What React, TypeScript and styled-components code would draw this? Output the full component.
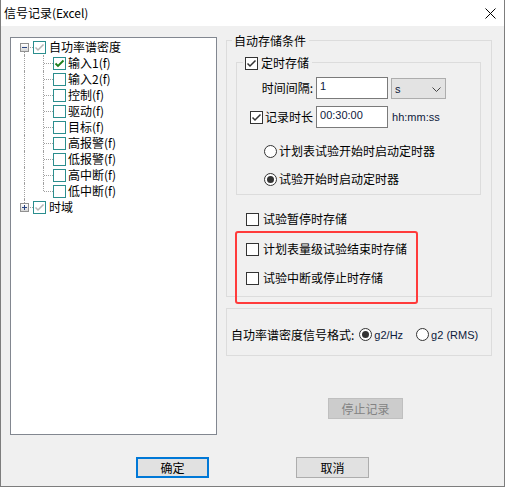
import styled, { createGlobalStyle } from 'styled-components'

const GlobalStyle = createGlobalStyle`
  html, body {
    margin: 0;
    padding: 0;
    background: #f0f0f0;
  }
  body {
    font-family: "Noto Sans CJK SC", "Noto Sans", sans-serif;
    font-size: 12px;
    color: #000;
  }
  * {
    box-sizing: border-box;
  }
`

type Line = 'full' | 'top' | 'bottom' | 'none'

const rootItems = [
  {
    label: '自功率谱密度',
    open: true,
    children: [
      { label: '输入1(f)', checked: true },
      { label: '输入2(f)' },
      { label: '控制(f)' },
      { label: '驱动(f)' },
      { label: '目标(f)' },
      { label: '高报警(f)' },
      { label: '低报警(f)' },
      { label: '高中断(f)' },
      { label: '低中断(f)' },
    ],
  },
  { label: '时域', open: false, children: [] },
]

const Check = ({ color, width = 1.5 }: { color: string; width?: number }) => (
  <svg width="11" height="11" viewBox="0 0 11 11">
    <path d="M1.5 5.5 L4 8 L9.5 2.5" fill="none" stroke={color} strokeWidth={width} />
  </svg>
)

const App = () => {
  return (
    <>
      <GlobalStyle />
      <Window>
        <TitleBar>
          <Title>信号记录(Excel)</Title>
          <Close>
            <svg width="11" height="11" viewBox="0 0 11 11">
              <path d="M0.5 0.5 L10.5 10.5 M10.5 0.5 L0.5 10.5" stroke="#000" strokeWidth="1" />
            </svg>
          </Close>
        </TitleBar>
        <Body>
          <Main>
            <Tree>
              {rootItems.map((root, i) => {
                const last = i === rootItems.length - 1
                return (
                  <div key={root.label}>
                    <TreeRow>
                      <Guide $w={22} $at={13} $v={last ? 'top' : 'bottom'} $h>
                        <Expander $open={root.open} />
                      </Guide>
                      <TreeBox>
                        <Check color="#b5b5b5" />
                      </TreeBox>
                      <TreeLabel $gap={3}>{root.label}</TreeLabel>
                    </TreeRow>
                    {root.open &&
                      root.children.map((c, j) => (
                        <TreeRow key={c.label}>
                          <Guide $w={22} $at={13} $v="full" />
                          <Guide
                            $w={20}
                            $at={10}
                            $v={j === root.children.length - 1 ? 'top' : 'full'}
                            $h
                          />
                          <TreeBox>{c.checked && <Check color="#1b7d1b" width={1.8} />}</TreeBox>
                          <TreeLabel $gap={2}>{c.label}</TreeLabel>
                        </TreeRow>
                      ))}
                  </div>
                )
              })}
            </Tree>

            <RightCol>
              <StoreGroup>
                <Caption $left={5}>自动存储条件</Caption>
                <TimerGroup>
                  <Caption $left={6}>
                    <Box>
                      <Check color="#333" />
                    </Box>
                    <span>定时存储</span>
                  </Caption>
                  <FieldRow>
                    <FieldLabel>时间间隔:</FieldLabel>
                    <TextField>1</TextField>
                    <Select>
                      <span>s</span>
                      <svg width="9" height="5" viewBox="0 0 9 5">
                        <path d="M0.5 0.5 L4.5 4.5 L8.5 0.5" fill="none" stroke="#444" strokeWidth="1" />
                      </svg>
                    </Select>
                  </FieldRow>
                  <FieldRow $top={7}>
                    <FieldLabel>
                      <Box>
                        <Check color="#333" />
                      </Box>
                      <span>记录时长</span>
                    </FieldLabel>
                    <TextField>00:30:00</TextField>
                    <Units>hh:mm:ss</Units>
                  </FieldRow>
                  <OptionRow $top={15} $left={14}>
                    <Radio />
                    <OptionText>计划表试验开始时启动定时器</OptionText>
                  </OptionRow>
                  <OptionRow $top={12} $left={14}>
                    <Radio $on />
                    <OptionText>试验开始时启动定时器</OptionText>
                  </OptionRow>
                </TimerGroup>

                <OptionRow $top={16} $left={10}>
                  <Box />
                  <OptionText $gap={4}>试验暂停时存储</OptionText>
                </OptionRow>
                <Highlight>
                  <OptionRow $left={10}>
                    <Box />
                    <OptionText $gap={4}>计划表量级试验结束时存储</OptionText>
                  </OptionRow>
                  <OptionRow $top={13} $left={10}>
                    <Box />
                    <OptionText $gap={4}>试验中断或停止时存储</OptionText>
                  </OptionRow>
                </Highlight>
              </StoreGroup>

              <FormatGroup>
                <FormatLabel>自功率谱密度信号格式:</FormatLabel>
                <Radio $on />
                <LatinText>g2/Hz</LatinText>
                <Radio $space={13} />
                <LatinText>g2 (RMS)</LatinText>
              </FormatGroup>

              <StopButton disabled>停止记录</StopButton>
            </RightCol>
          </Main>

          <Footer>
            <Button $default>确定</Button>
            <Button>取消</Button>
          </Footer>
        </Body>
      </Window>
    </>
  )
}

const Window = styled.div`
  width: 505px;
  height: 487px;
  border: 1px solid #7d7d7d;
  border-top: none;
  background: #f0f0f0;
  display: flex;
  flex-direction: column;
  overflow: hidden;
`

const TitleBar = styled.div`
  height: 26px;
  flex: 0 0 26px;
  background: #fff;
  display: flex;
  align-items: center;
  justify-content: space-between;
  padding: 0 8px 0 3px;
`

const Title = styled.div`
  font-size: 12px;
  line-height: 16px;
`

const Close = styled.div`
  display: flex;
  align-items: center;
  margin-top: 1px;
`

const Body = styled.div`
  padding: 11px 0 0 9px;
`

const Main = styled.div`
  display: grid;
  grid-template-columns: 207px 266px;
  column-gap: 9px;
  align-items: start;
`

const Tree = styled.div`
  height: 398px;
  background: #fff;
  border: 1px solid #828790;
  padding-top: 1px;
`

const TreeRow = styled.div`
  height: 16px;
  display: flex;
  align-items: center;
`

const Guide = styled.span<{ $w: number; $at: number; $v: Line; $h?: boolean }>`
  position: relative;
  flex: 0 0 ${(p) => p.$w}px;
  align-self: stretch;
  &::before {
    content: '';
    display: ${(p) => (p.$v === 'none' ? 'none' : 'block')};
    position: absolute;
    left: ${(p) => p.$at}px;
    top: ${(p) => (p.$v === 'bottom' ? '8px' : '0')};
    bottom: ${(p) => (p.$v === 'top' ? '8px' : '0')};
    border-left: 1px dotted #a0a0a0;
  }
  &::after {
    content: '';
    display: ${(p) => (p.$h ? 'block' : 'none')};
    position: absolute;
    left: ${(p) => p.$at + 1}px;
    right: 0;
    top: 8px;
    border-top: 1px dotted #a0a0a0;
  }
`

const Expander = styled.span<{ $open: boolean }>`
  position: absolute;
  z-index: 1;
  left: 9px;
  top: 4px;
  width: 9px;
  height: 9px;
  border: 1px solid #919191;
  background: linear-gradient(#ffffff, #d6d6d6);
  &::before {
    content: '';
    position: absolute;
    left: 1px;
    top: 3px;
    width: 5px;
    height: 1px;
    background: #2a4683;
  }
  &::after {
    content: '';
    display: ${(p) => (p.$open ? 'none' : 'block')};
    position: absolute;
    left: 3px;
    top: 1px;
    width: 1px;
    height: 5px;
    background: #2a4683;
  }
`

const Box = styled.span`
  flex: 0 0 13px;
  width: 13px;
  height: 13px;
  border: 1px solid #333;
  background: #fff;
  display: inline-flex;
  align-items: center;
  justify-content: center;
`

const TreeBox = styled(Box)`
  border-color: #2b8e8e;
`

const TreeLabel = styled.span<{ $gap: number }>`
  margin-left: ${(p) => p.$gap}px;
  line-height: 16px;
  white-space: nowrap;
`

const RightCol = styled.div`
  display: flex;
  flex-direction: column;
  align-items: flex-start;
  margin-top: 3px;
`

const GroupBox = styled.div`
  position: relative;
  border: 1px solid #dcdcdc;
  display: flex;
  flex-direction: column;
`

const StoreGroup = styled(GroupBox)`
  width: 266px;
  padding: 21px 10px 10px 9px;
`

const TimerGroup = styled(GroupBox)`
  padding: 14px 0 7px 13px;
`

const Caption = styled.div<{ $left: number }>`
  position: absolute;
  top: -8px;
  left: ${(p) => p.$left}px;
  height: 16px;
  line-height: 16px;
  padding: 0 3px 0 2px;
  background: #f0f0f0;
  display: flex;
  align-items: center;
  gap: 3px;
  white-space: nowrap;
`

const FieldRow = styled.div<{ $top?: number }>`
  display: flex;
  align-items: center;
  height: 22px;
  margin-top: ${(p) => p.$top ?? 0}px;
`

const FieldLabel = styled.div`
  flex: 0 0 63px;
  display: flex;
  align-items: center;
  justify-content: flex-end;
  gap: 2px;
  margin-right: 3px;
  white-space: nowrap;
  line-height: 16px;
`

const TextField = styled.div`
  width: 72px;
  height: 22px;
  border: 1px solid #7a7a7a;
  background: #fff;
  padding: 2px 3px 0;
  font-family: "Liberation Sans", Arial, sans-serif;
  font-size: 11px;
  line-height: 13px;
  color: #0e1a3c;
`

const Select = styled.div`
  width: 55px;
  height: 21px;
  align-self: flex-end;
  margin-left: 3px;
  border: 1px solid #adadad;
  background: #e3e3e3;
  display: flex;
  align-items: center;
  justify-content: space-between;
  padding: 1px 4px 0 3px;
  font-family: "Liberation Sans", Arial, sans-serif;
  font-size: 11px;
  color: #0e1a3c;
`

const Units = styled.span`
  margin-left: 4px;
  font-family: "Liberation Sans", Arial, sans-serif;
  font-size: 11px;
  color: #0e1a3c;
`

const OptionRow = styled.div<{ $top?: number; $left?: number }>`
  display: flex;
  align-items: center;
  height: 16px;
  margin-top: ${(p) => p.$top ?? 0}px;
  margin-left: ${(p) => p.$left ?? 0}px;
`

const OptionText = styled.span<{ $gap?: number }>`
  margin-left: ${(p) => p.$gap ?? 2}px;
  line-height: 16px;
  white-space: nowrap;
`

const Radio = styled.span<{ $on?: boolean; $space?: number }>`
  flex: 0 0 13px;
  width: 13px;
  height: 13px;
  margin-left: ${(p) => p.$space ?? 0}px;
  border: 1px solid #333;
  border-radius: 50%;
  background: #fff;
  display: inline-flex;
  align-items: center;
  justify-content: center;
  &::after {
    content: '';
    display: ${(p) => (p.$on ? 'block' : 'none')};
    width: 7px;
    height: 7px;
    border-radius: 50%;
    background: #333;
  }
`

const Highlight = styled.div`
  position: relative;
  margin-top: 14px;
  &::after {
    content: '';
    position: absolute;
    top: -10px;
    left: -1px;
    width: 179px;
    height: 69px;
    border: 2px solid #ff3b3b;
    border-radius: 3px;
    pointer-events: none;
  }
`

const FormatGroup = styled(GroupBox)`
  width: 266px;
  height: 48px;
  margin-top: 11px;
  flex-direction: row;
  align-items: center;
  padding: 5px 0 0 4px;
`

const FormatLabel = styled.span`
  margin-right: 5px;
  line-height: 16px;
  white-space: nowrap;
`

const LatinText = styled.span`
  margin-left: 2px;
  font-family: "Liberation Sans", Arial, sans-serif;
  font-size: 11px;
  color: #0e1a3c;
  white-space: nowrap;
`

const Button = styled.button<{ $default?: boolean }>`
  width: 73px;
  height: 21px;
  padding: 0;
  background: #e1e1e1;
  border: ${(p) => (p.$default ? '2px solid #0078d7' : '1px solid #adadad')};
  font-family: "Noto Sans CJK SC", sans-serif;
  font-size: 12px;
  line-height: 16px;
  color: #000;
`

const StopButton = styled(Button)`
  width: 75px;
  margin: 42px 0 0 102px;
  background: #cccccc;
  border: 1px solid #bfbfbf;
  color: #838383;
`

const Footer = styled.div`
  display: flex;
  gap: 87px;
  margin: 22px 0 0 126px;
`

export default App
